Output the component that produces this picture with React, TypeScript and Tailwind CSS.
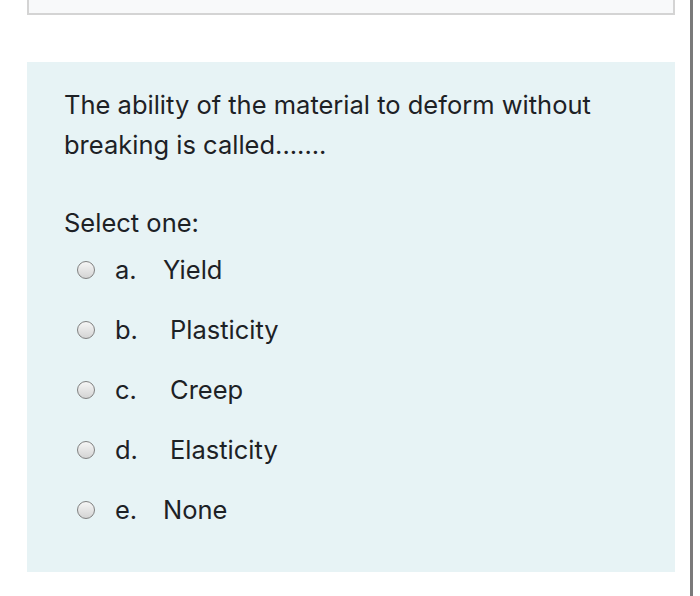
import React from 'react'

const options = [
  { letter: 'a.', text: 'Yield', textX: 'w-[48px]' },
  { letter: 'b.', text: 'Plasticity', textX: 'w-[55px]' },
  { letter: 'c.', text: 'Creep', textX: 'w-[55px]' },
  { letter: 'd.', text: 'Elasticity', textX: 'w-[55px]' },
  { letter: 'e.', text: 'None', textX: 'w-[48px]' },
]

function Radio() {
  return (
    <span className="inline-block shrink-0 w-[18px] h-[18px] rounded-full border border-[#808080] bg-gradient-to-b from-[#f6f6f6] to-[#d4d4d4]" />
  )
}

export default function App() {
  return (
    <div className="relative w-[700px] h-[596px] bg-white overflow-hidden font-['Inter',sans-serif] text-[#1d2125]">
      {/* right scroll edge */}
      <div className="absolute right-[7px] top-0 w-[3px] h-full bg-[#7a7a7a]" />

      <div className="pl-[27px] w-[675px]">
        {/* previous card bottom */}
        <div className="h-[15px] border-2 border-t-0 border-[#d4d4d4] bg-[#f8f9fa]" />

        {/* question box */}
        <div className="mt-[47px] h-[510px] bg-[#e7f3f5] pl-[37px] pt-[23px]">
          <p className="text-[25.5px] leading-[40px]">
            The ability of the material to deform without
            <br />
            breaking is called.......
          </p>

          <p className="mt-[38px] text-[25.5px] leading-[40px]">Select one:</p>

          <div className="mt-[-3px] flex flex-col">
            {options.map((o) => (
              <div key={o.letter} className="flex items-center h-[60px] pl-[13px]">
                <Radio />
                <span className={`ml-[20px] text-[25.5px] ${o.textX}`}>{o.letter}</span>
                <span className="text-[25.5px]">{o.text}</span>
              </div>
            ))}
          </div>
        </div>
      </div>
    </div>
  )
}
